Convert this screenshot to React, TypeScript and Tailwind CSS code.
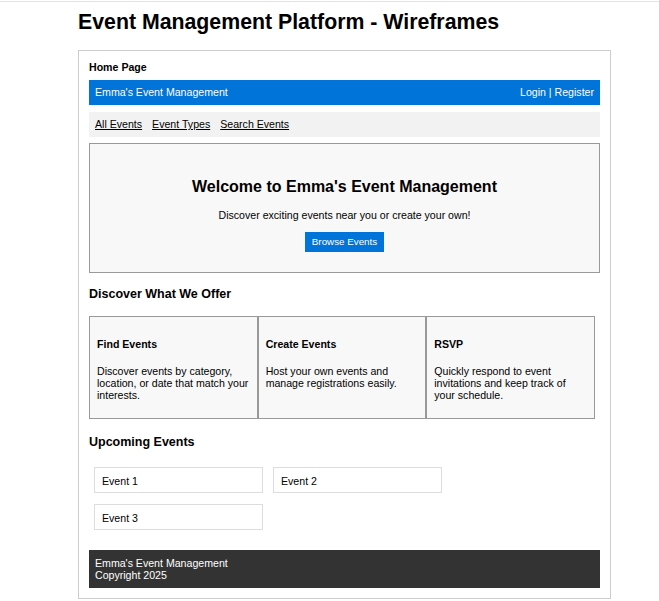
export default function App() {
  const offers = [
    { title: 'Find Events', text: 'Discover events by category, location, or date that match your interests.' },
    { title: 'Create Events', text: 'Host your own events and manage registrations easily.' },
    { title: 'RSVP', text: 'Quickly respond to event invitations and keep track of your schedule.' },
  ]
  const events = ['Event 1', 'Event 2', 'Event 3']

  return (
    <div className="min-h-[601px] bg-white text-black font-['Liberation_Sans',Arial,sans-serif]">
      <div className="h-px mt-px bg-[#e3e3e3]" />
      <div className="ml-[78px] w-[533px]">
        <h1 className="pt-[8px] pb-[16px] text-[21.3px] leading-[24px] font-bold">
          Event Management Platform - Wireframes
        </h1>

        <div className="border border-[#cccccc] px-[10px] pt-[10px] pb-[10px]">
          <div className="text-[10.6px] leading-[13px] font-bold">Home Page</div>

          <div className="mt-[6px] flex items-center justify-between bg-[#0074d9] px-[6px] py-[6px] text-[10.6px] leading-[13px] text-white">
            <span>Emma's Event Management</span>
            <span>Login | Register</span>
          </div>

          <div className="mt-[7px] flex gap-[10px] bg-[#f2f2f2] px-[6px] py-[6px] text-[10.6px] leading-[13px]">
            <a className="underline">All Events</a>
            <a className="underline">Event Types</a>
            <a className="underline">Search Events</a>
          </div>

          <div className="mt-[6px] flex flex-col items-center border border-[#999999] bg-[#f8f8f8] pt-[34px] pb-[20px]">
            <h2 className="text-[16px] leading-[18px] font-bold">Welcome to Emma's Event Management</h2>
            <p className="mt-[13px] text-[10.6px] leading-[13px]">Discover exciting events near you or create your own!</p>
            <button className="mt-[10px] h-[20px] w-[79px] bg-[#0074d9] text-[9.8px] text-white">Browse Events</button>
          </div>

          <h3 className="mt-[14px] text-[12.5px] leading-[14px] font-bold">Discover What We Offer</h3>

          <div className="mt-[15px] flex">
            {offers.map((o) => (
              <div key={o.title} className="w-[33%] border border-[#999999] bg-[#f8f8f8] px-[7px] pt-[21px] pb-[17px]">
                <h4 className="text-[10.6px] leading-[13px] font-bold">{o.title}</h4>
                <p className="mt-[14px] text-[10.6px] leading-[12px]">{o.text}</p>
              </div>
            ))}
          </div>

          <h3 className="mt-[16px] text-[12.5px] leading-[14px] font-bold">Upcoming Events</h3>

          <div className="mt-[18px] ml-[5px] grid grid-cols-[169px_169px] gap-x-[10px] gap-y-[11px]">
            {events.map((e) => (
              <div key={e} className="border border-[#dddddd] px-[7px] pt-[7px] pb-[5px] text-[10.6px] leading-[12px]">
                {e}
              </div>
            ))}
          </div>

          <div className="mt-[20px] bg-[#333333] px-[6px] pt-[7px] pb-[7px] text-[10.6px] leading-[12px] text-white">
            <div>Emma's Event Management</div>
            <div>Copyright 2025</div>
          </div>
        </div>
      </div>
    </div>
  )
}
